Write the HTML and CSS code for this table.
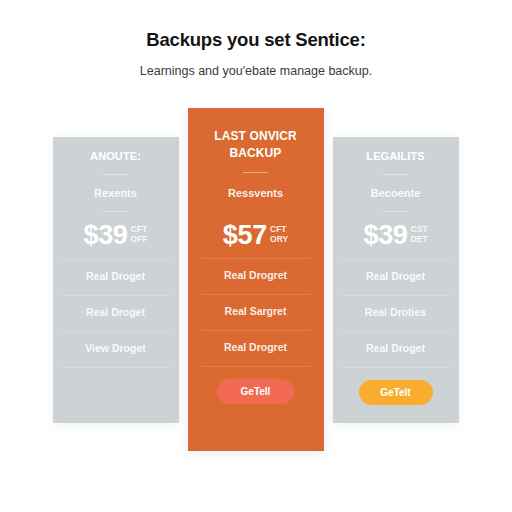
FILE: index.html
```html
<!DOCTYPE html>
<html>
<head>
<meta charset="utf-8">
<link rel="stylesheet" href="styles.css">
</head>
<body>
<main class="page">
  <h1 class="headline">Backups you set Sentice:</h1>
  <p class="lead">Learnings and you'ebate manage backup.</p>
  <section class="plans">
    <div class="card side">
      <div class="c-title">ANOUTE:</div>
      <div class="rule"></div>
      <div class="c-sub">Rexents</div>
      <div class="rule"></div>
      <div class="price"><span class="amt">$39</span><span class="per"><span>CFT</span><span>OFF</span></span></div>
      <ul class="feats">
        <li>Real Droget</li>
        <li>Real Droget</li>
        <li>View Droget</li>
      </ul>
    </div>
    <div class="card featured">
      <div class="c-title">LAST ONVICR<br>BACKUP</div>
      <div class="rule"></div>
      <div class="c-sub">Ressvents</div>
      <div class="rule blank"></div>
      <div class="price"><span class="amt">$57</span><span class="per"><span>CFT</span><span>ORY</span></span></div>
      <ul class="feats">
        <li>Real Drogret</li>
        <li>Real Sargret</li>
        <li>Real Drogret</li>
      </ul>
      <button class="btn red">GeTell</button>
    </div>
    <div class="card side">
      <div class="c-title">LEGAILITS</div>
      <div class="rule"></div>
      <div class="c-sub">Becoente</div>
      <div class="rule"></div>
      <div class="price"><span class="amt">$39</span><span class="per"><span>CST</span><span>DET</span></span></div>
      <ul class="feats">
        <li>Real Droget</li>
        <li>Real Droties</li>
        <li>Real Droget</li>
      </ul>
      <button class="btn amber">GeTelt</button>
    </div>
  </section>
</main>
</body>
</html>
```

FILE: styles.css
```css
* { box-sizing: border-box; }
html, body { margin: 0; padding: 0; background: #ffffff; }
body { font-family: "Liberation Sans", Arial, sans-serif; }
.page { width: 512px; height: 512px; padding-top: 29px; }
.headline {
  margin: 0;
  text-align: center;
  font-size: 18.5px;
  line-height: 22px;
  font-weight: 700;
  color: #151515;
  letter-spacing: -0.2px;
}
.lead {
  margin: 13px 0 0;
  text-align: center;
  font-size: 12.5px;
  line-height: 14px;
  color: #3a3a3a;
}
.plans {
  display: flex;
  justify-content: center;
  align-items: center;
  gap: 9px;
  margin-top: 30px;
  padding-right: 1px;
}
.card {
  display: flex;
  flex-direction: column;
  align-items: center;
  color: #ffffff;
}
.side {
  width: 126px;
  height: 286px;
  background: #cdd2d5;
  box-shadow: 0 2px 10px rgba(0,0,0,0.06);
}
.featured {
  width: 136px;
  height: 343px;
  background: #da6a31;
  box-shadow: 0 3px 12px rgba(0,0,0,0.08);
}
.c-title {
  font-weight: 700;
  font-size: 11px;
  line-height: 12px;
  padding-top: 13px;
  height: 37px;
  text-align: center;
  letter-spacing: 0.1px;
}
.featured .c-title {
  font-size: 12px;
  line-height: 17px;
  padding-top: 20px;
  height: 64px;
  font-weight: 700;
}
.rule {
  width: 25px;
  height: 1px;
  background: rgba(255,255,255,0.45);
  flex: none;
}
.rule.blank { background: transparent; }
.c-sub {
  height: 36px;
  line-height: 36px;
  font-size: 11px;
  font-weight: 700;
  color: rgba(255,255,255,0.92);
}
.featured .c-sub { line-height: 40px; height: 37px; }
.price {
  display: flex;
  align-items: center;
  justify-content: center;
  height: 47px;
  width: 100%;
}
.amt {
  font-size: 27px;
  font-weight: 700;
  letter-spacing: -0.3px;
  line-height: 30px;
}
.per {
  display: flex;
  flex-direction: column;
  font-size: 8.5px;
  font-weight: 700;
  line-height: 10px;
  margin-left: 3px;
  margin-top: -2px;
  color: rgba(255,255,255,0.9);
}
.feats {
  list-style: none;
  padding: 0;
  align-self: stretch;
  margin: 0 8px;
  border-top: 1px solid rgba(255,255,255,0.22);
}
.featured .feats { margin: 0 14px; border-top-color: rgba(255,255,255,0.14); }
.feats li {
  height: 36px;
  line-height: 33px;
  border-bottom: 1px solid rgba(255,255,255,0.22);
  text-align: center;
  font-size: 10.5px;
  font-weight: 700;
  color: rgba(255,255,255,0.9);
}
.featured .feats li { border-bottom-color: rgba(255,255,255,0.14); }
.btn {
  margin-top: 12px;
  height: 25px;
  border: none;
  border-radius: 13px;
  color: #ffffff;
  font-family: inherit;
  font-size: 10px;
  font-weight: 700;
  padding: 0;
}
.btn.red { width: 77px; background: #f26a52; }
.btn.amber { width: 74px; background: #f8ad2f; }
```
